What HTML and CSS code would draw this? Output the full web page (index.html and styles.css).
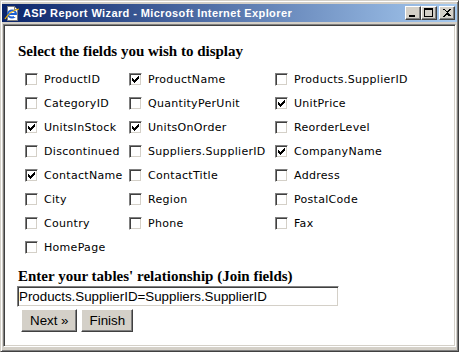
FILE: index.html
```html
<!DOCTYPE html>
<html lang="en">
<head>
    <meta charset="UTF-8">
    <title>ASP Report Wizard</title>
    <link rel="stylesheet" href="styles.css">
</head>
<body>
    <div class="window">
        <div class="titlebar">
            <svg class="app-icon" width="16" height="16" viewBox="0 0 16 16" shape-rendering="crispEdges">
                <path d="M3 1h7l3 3v11H3z" fill="#fff" stroke="#808080"/>
                <path d="M10 1v3h3" fill="none" stroke="#808080"/>
                <ellipse cx="8" cy="9" rx="4" ry="3.5" fill="none" stroke="#1c5fd1" stroke-width="2" shape-rendering="auto"/>
                <rect x="4" y="8" width="8" height="2" fill="#1c5fd1"/>
                <rect x="10" y="10" width="3" height="2" fill="#fff"/>
                <path d="M1 14C4 9 10 5 15 4" fill="none" stroke="#f4b400" stroke-width="1.2" shape-rendering="auto"/>
            </svg>
            <span class="title">ASP Report Wizard - Microsoft Internet Explorer</span>
            <div class="controls">
                <span class="ctl">
                    <svg width="12" height="10" viewBox="0 0 12 10" shape-rendering="crispEdges"><rect x="2" y="7" width="6" height="2" fill="#000"/></svg>
                </span>
                <span class="ctl">
                    <svg width="12" height="10" viewBox="0 0 12 10" shape-rendering="crispEdges"><path d="M1 0h9v9H1zM2 2v6h7V2z" fill="#000" fill-rule="evenodd"/></svg>
                </span>
                <span class="ctl close">
                    <svg width="12" height="10" viewBox="0 0 12 10" shape-rendering="crispEdges"><path d="M2 1h2v1h1v1h2V2h1V1h2v1H9v1H8v1H7v1h1v1h1v1h1v1H8V8H7V7H5v1H4v1H2V8h1V7h1V6h1V5h1V4H5V3H4V2H2z" fill="#000"/></svg>
                </span>
            </div>
        </div>
        <div class="client">
            <form class="wizard">
                <h3>Select the fields you wish to display</h3>
                <div class="fields">
                    <label class="field"><span class="box"></span>ProductID</label>
                    <label class="field"><span class="box checked"></span>ProductName</label>
                    <label class="field"><span class="box"></span>Products.SupplierID</label>

                    <label class="field"><span class="box"></span>CategoryID</label>
                    <label class="field"><span class="box"></span>QuantityPerUnit</label>
                    <label class="field"><span class="box checked"></span>UnitPrice</label>

                    <label class="field"><span class="box checked"></span>UnitsInStock</label>
                    <label class="field"><span class="box checked"></span>UnitsOnOrder</label>
                    <label class="field"><span class="box"></span>ReorderLevel</label>

                    <label class="field"><span class="box"></span>Discontinued</label>
                    <label class="field"><span class="box"></span>Suppliers.SupplierID</label>
                    <label class="field"><span class="box checked"></span>CompanyName</label>

                    <label class="field"><span class="box checked"></span>ContactName</label>
                    <label class="field"><span class="box"></span>ContactTitle</label>
                    <label class="field"><span class="box"></span>Address</label>

                    <label class="field"><span class="box"></span>City</label>
                    <label class="field"><span class="box"></span>Region</label>
                    <label class="field"><span class="box"></span>PostalCode</label>

                    <label class="field"><span class="box"></span>Country</label>
                    <label class="field"><span class="box"></span>Phone</label>
                    <label class="field"><span class="box"></span>Fax</label>

                    <label class="field"><span class="box"></span>HomePage</label>
                </div>

                <h3 class="join-title">Enter your tables' relationship (Join fields)</h3>
                <input type="text" class="join" value="Products.SupplierID=Suppliers.SupplierID">
                <div class="actions">
                    <button type="button">Next &raquo;</button>
                    <button type="button">Finish</button>
                </div>
            </form>
        </div>
    </div>
</body>
</html>
```

FILE: styles.css
```css
:root {
    --face: #d4d0c8;
    --shadow: #808080;
    --dark: #404040;
    --light: #ffffff;
}

body {
    margin: 0;
    background: #ffffff;
}

.window {
    width: 459px;
    height: 352px;
    box-sizing: border-box;
    display: flex;
    flex-direction: column;
    padding: 3px 1px 4px 1px;
    background: var(--face);
    border: 1px solid;
    border-color: var(--face) var(--dark) var(--dark) var(--face);
    box-shadow: inset 1px 1px var(--light), inset -1px -1px var(--shadow);
}

/* title bar */
.titlebar {
    height: 18px;
    display: flex;
    align-items: center;
    padding: 0 2px 0 2px;
    background: linear-gradient(to right, #0a246a, #a6caf0);
    color: #fff;
}

.app-icon {
    flex: none;
    margin-right: 3px;
}

.title {
    font-family: "Liberation Sans", Arial, sans-serif;
    font-weight: bold;
    font-size: 11px;
    letter-spacing: 0.4px;
    white-space: nowrap;
}

.controls {
    margin-left: auto;
    display: flex;
}

.ctl {
    width: 16px;
    height: 14px;
    box-sizing: border-box;
    display: flex;
    align-items: center;
    justify-content: center;
    background: var(--face);
    border: 1px solid;
    border-color: var(--light) var(--dark) var(--dark) var(--light);
    box-shadow: inset -1px -1px var(--shadow);
}

.ctl.close {
    margin-left: 2px;
}

/* client area */
.client {
    flex: 1;
    margin: 2px 1px 0 1px;
    background: #fff;
    border: 1px solid;
    border-color: var(--shadow) var(--light) var(--light) var(--shadow);
    box-shadow: inset 1px 1px var(--dark), inset -1px -1px var(--face);
}

.wizard {
    padding: 18px 0 0 14px;
}

h3 {
    margin: 0;
    font-family: "Liberation Serif", "Times New Roman", serif;
    font-size: 15px;
    line-height: 17px;
    font-weight: bold;
    color: #000;
}

.fields {
    display: grid;
    grid-template-columns: 104px 146px auto;
    grid-auto-rows: 24px;
    margin: 7px 0 0 7px;
}

.field {
    display: flex;
    align-items: center;
    gap: 6px;
    font-family: "DejaVu Sans", Verdana, sans-serif;
    font-size: 11px;
    letter-spacing: 0.3px;
    color: #000;
    white-space: nowrap;
}

.box {
    width: 13px;
    height: 13px;
    box-sizing: border-box;
    flex: none;
    background: #fff;
    border: 1px solid;
    border-color: var(--shadow) var(--light) var(--light) var(--shadow);
    box-shadow: inset 1px 1px var(--dark), inset -1px -1px var(--face);
}

.box.checked {
    background:
        linear-gradient(#000, #000) 8px 2px / 1px 1px no-repeat,
        linear-gradient(#000, #000) 7px 3px / 2px 1px no-repeat,
        linear-gradient(#000, #000) 6px 4px / 3px 1px no-repeat,
        linear-gradient(#000, #000) 2px 4px / 1px 1px no-repeat,
        linear-gradient(#000, #000) 2px 5px / 2px 1px no-repeat,
        linear-gradient(#000, #000) 5px 5px / 3px 1px no-repeat,
        linear-gradient(#000, #000) 2px 6px / 5px 1px no-repeat,
        linear-gradient(#000, #000) 3px 7px / 3px 1px no-repeat,
        linear-gradient(#000, #000) 4px 8px / 1px 1px no-repeat,
        #fff;
}

.join-title {
    margin-top: 9px;
}

.join {
    display: block;
    width: 322px;
    height: 21px;
    box-sizing: border-box;
    margin: 1px 0 0 -1px;
    padding: 0 1px;
    font-family: "Liberation Sans", Arial, sans-serif;
    font-size: 13.33px;
    color: #000;
    background: #fff;
    border: 1px solid;
    border-color: var(--shadow) var(--light) var(--light) var(--shadow);
    box-shadow: inset 1px 1px var(--dark), inset -1px -1px var(--face);
    outline: none;
}

.actions {
    display: flex;
    gap: 4px;
    margin: 2px 0 0 3px;
}

button {
    height: 23px;
    padding: 0 7px 0 8px;
    font-family: "Liberation Sans", Arial, sans-serif;
    font-size: 13.33px;
    color: #000;
    background: var(--face);
    border: 1px solid;
    border-color: var(--light) var(--dark) var(--dark) var(--light);
    box-shadow: inset -1px -1px var(--shadow), inset 1px 1px var(--face);
    border-radius: 0;
}
```
